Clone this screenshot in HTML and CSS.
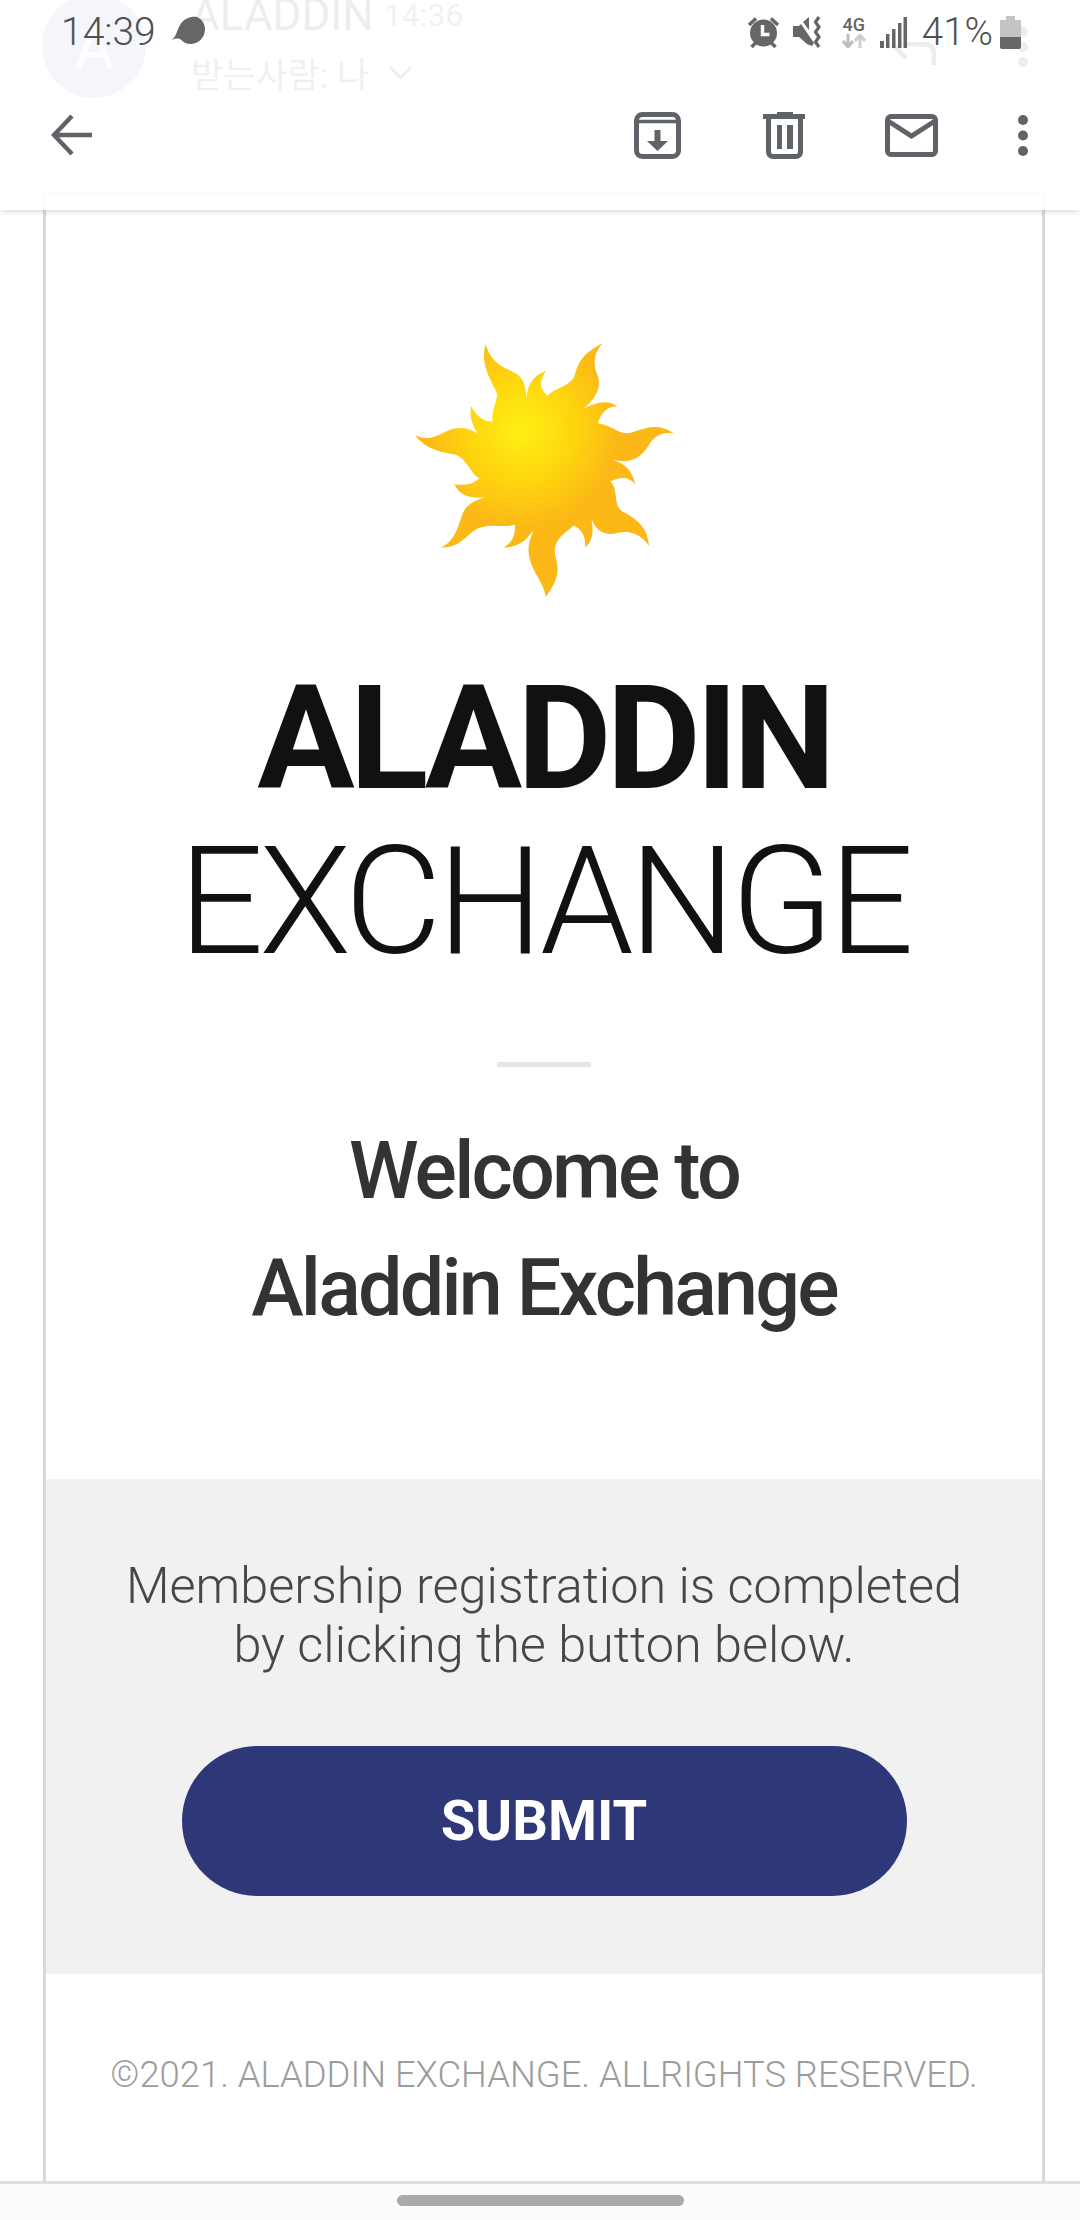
FILE: index.html
```html
<!DOCTYPE html>
<html lang="en">
<head>
<meta charset="utf-8">
<title>Aladdin Exchange</title>
<link rel="stylesheet" href="styles.css">
</head>
<body>
<div class="screen">
  <div class="ghost-row">
    <div class="avatar">A</div>
    <div class="ghost-info">
      <div class="ghost-line"><span class="ghost-name">ALADDIN</span><span class="ghost-time">14:36</span></div>
      <div class="ghost-line ghost-to"><span>받는사람: 나</span>
        <svg class="ghost-chev" viewBox="0 0 24 14"><path d="M1 1l11 11L23 1" fill="none" stroke="#333" stroke-width="3"/></svg>
      </div>
    </div>
    <div class="ghost-actions">
      <svg class="ghost-reply" viewBox="0 0 45 23"><path d="M1 2l14 14M14 2h19q10 0 10 10v11" fill="none" stroke="#222" stroke-width="5"/></svg>
      <svg class="ghost-more" viewBox="0 0 10 40"><circle cx="5" cy="5" r="5" fill="#222"/><circle cx="5" cy="20" r="5" fill="#222"/><circle cx="5" cy="35" r="5" fill="#222"/></svg>
    </div>
  </div>
  <main class="card">
    <section class="hero">
      <svg class="sun" viewBox="72 72 778 760" role="img" aria-label="Aladdin sun logo">
        <defs>
          <radialGradient id="sunfill" gradientUnits="userSpaceOnUse" cx="392" cy="330" r="295">
            <stop offset="0" stop-color="#fff012"/>
            <stop offset=".55" stop-color="#fed40f"/>
            <stop offset="1" stop-color="#fbb816"/>
          </radialGradient>
        </defs>
        <path fill="url(#sunfill)" d="M470 228C490 205 530 200 548 175C560 150 555 110 635 70C610 100 605 130 620 165C635 205 610 240 578 266C610 250 650 235 680 260C650 258 630 280 622 310C660 315 680 340 710 340C750 335 790 300 850 340C810 335 790 350 775 375C745 425 710 430 665 420C700 430 725 450 733 493C715 470 690 470 658 485C685 505 665 555 695 575C735 595 770 620 775 678C750 645 720 630 680 640C635 650 610 630 597 583C610 615 610 665 583 683C585 650 575 630 548 617C525 640 480 660 495 715C510 765 490 795 465 832C460 790 425 760 415 710C408 675 420 655 428 630C410 660 380 685 338 683C365 670 375 640 372 615C340 625 300 610 265 625C225 640 215 685 150 683C190 665 200 625 212 590C225 550 255 540 285 532C250 535 210 535 190 493C215 498 245 495 265 475C240 465 235 425 195 405C150 395 105 390 72 345C110 365 135 350 165 335C205 315 250 325 275 355C250 335 235 300 240 258C255 285 275 305 305 305C300 270 320 245 318 220C300 180 265 130 285 72C295 120 330 140 365 155C400 170 405 200 407 235C410 190 430 165 465 153C445 185 445 205 470 228Z"/>
      </svg>
      <h1 class="brand"><span class="brand-top">ALADDIN</span><span class="brand-bottom">EXCHANGE</span></h1>
      <div class="divider"></div>
      <h2 class="welcome">Welcome to<br>Aladdin Exchange</h2>
    </section>
    <section class="band">
      <p class="band-text">Membership registration is completed<br>by clicking the button below.</p>
      <a class="submit">SUBMIT</a>
    </section>
    <footer class="copy">©2021. ALADDIN EXCHANGE. ALLRIGHTS RESERVED.</footer>
  </main>

  <header class="topbar">
    <div class="status">
      <div class="status-left">
        <span class="clock">14:39</span>
        <svg class="ic-chat" viewBox="0 0 34 28"><path fill="#666" d="M0 24C5 22 6 14 9 9C13 2 21 0 26 1C31 3 34 8 34 13C34 22 27 28 19 28C14 28 12 25 9 23C6 22 3 23 0 24Z"/></svg>
      </div>
      <div class="status-right">
        <svg class="ic-alarm" viewBox="0 0 33 32">
          <circle cx="16.500" cy="17" r="13.500" fill="#666"/>
          <path d="M2 9l7-6.500M31 9l-7-6.500M4.500 31l4-4M28.500 31l-4-4" stroke="#666" stroke-width="3.500" fill="none"/>
          <path d="M15.500 9v9.500h7" stroke="#fff" stroke-width="3.500" fill="none"/>
        </svg>
        <svg class="ic-mute" viewBox="0 0 30 32">
          <path fill="#666" d="M0 10h6l2-2 13 19-2 3-5-2-8-7H0zM10 6l6-5v13z"/>
          <path d="M26 1l-3.500 5 3.500 5-3.500 5 3.500 5-3.500 5 3.500 5" stroke="#666" stroke-width="3.200" fill="none"/>
        </svg>
        <span class="net"><span class="net-label">4G</span>
          <svg class="ic-updown" viewBox="0 0 24 14"><path d="M6 0v12M1 7l5 6 5-6" stroke="#bdbdbd" stroke-width="3" fill="none"/><path d="M18 14V2M13 7l5-6 5 6" stroke="#cfcfcf" stroke-width="3" fill="none"/></svg>
        </span>
        <svg class="ic-signal" viewBox="0 0 27 31"><path fill="#666" d="M0 24h4v7H0zM6 17h3.500v14H6zM12 12h3.500v19H12zM18 6h3.500v25H18zM23.500 0H27v31h-3.500z"/></svg>
        <span class="pct">41%</span>
        <svg class="ic-batt" viewBox="0 0 21 33"><path fill="#c4c4c4" d="M6 0h9v4h6v18H0V4h6z"/><path fill="#666" d="M0 21h21v10a2 2 0 0 1-2 2H2a2 2 0 0 1-2-2z"/></svg>
      </div>
    </div>
    <div class="tools">
      <svg class="ic-back" viewBox="0 0 41 42"><path d="M41 21H4M21 2L3 21l18 19" fill="none" stroke="#5f6368" stroke-width="4.500"/></svg>
      <div class="tools-right">
        <svg class="ic-archive" viewBox="0 0 47 47">
          <rect x="2.500" y="2.500" width="42" height="42" rx="6" fill="none" stroke="#5f6368" stroke-width="5"/>
          <path d="M3 9.500h41" stroke="#5f6368" stroke-width="3.500"/>
          <path d="M20.500 18h6v11H34L23.500 39 13 29h7.500z" fill="#5f6368"/>
        </svg>
        <svg class="ic-trash" viewBox="0 0 42 47">
          <path d="M14 0h16v2h12v5H0V2h14z" fill="#5f6368"/>
          <path d="M5.500 6v34a4.500 4.500 0 0 0 4.500 4.500h23a4.500 4.500 0 0 0 4.500-4.500V6" fill="none" stroke="#5f6368" stroke-width="5"/>
          <path d="M14 13h5v24h-5zM24 13h6v24h-6z" fill="#5f6368"/>
        </svg>
        <svg class="ic-mail" viewBox="0 0 53 43">
          <rect x="2.500" y="2.500" width="48" height="38" rx="3.500" fill="none" stroke="#5f6368" stroke-width="5"/>
          <path d="M3 7l23.500 15L50 7" fill="none" stroke="#5f6368" stroke-width="5"/>
        </svg>
        <svg class="ic-more" viewBox="0 0 10 41"><circle cx="5" cy="5" r="5" fill="#5f6368"/><circle cx="5" cy="20.500" r="5" fill="#5f6368"/><circle cx="5" cy="36" r="5" fill="#5f6368"/></svg>
      </div>
    </div>
  </header>

  <div class="navbar"><span class="pill"></span></div>
</div>
</body>
</html>
```
FILE: styles.css
```css
* { box-sizing: border-box; }
html, body { margin: 0; padding: 0; background: #fff; }
body { font-family: Roboto, "Noto Sans CJK KR", sans-serif; }
.screen { position: relative; width: 1080px; height: 2220px; overflow: hidden; background: #fff; }

/* content beneath the translucent toolbar */
.ghost-row { height: 192px; display: flex; padding-left: 42px; gap: 45px; }
.avatar { width: 104px; height: 104px; margin-top: -6px; border-radius: 50%; background: #7e86d6; color: #fff; font-size: 60px; text-align: center; line-height: 108px; flex: none; }
.ghost-info { display: flex; flex-direction: column; color: #1c1c1c; }
.ghost-line { display: flex; align-items: center; }
.ghost-name { font-size: 44px; line-height: 48px; margin-top: -9px; }
.ghost-time { font-size: 32px; margin-left: 10px; margin-top: -9px; color: #555; }
.ghost-to { font-size: 35px; margin-top: 8px; gap: 20px; color: #444; }
.ghost-chev { width: 23px; height: 14px; }
.ghost-actions { margin-left: auto; display: flex; align-items: flex-start; gap: 82px; padding: 27px 52px 0 0; }
.ghost-reply { width: 45px; height: 23px; margin-top: 15px; }
.ghost-more { width: 10px; height: 40px; }

.card { margin: 0 35px 0 43px; border: 3px solid #d9d9d9; border-bottom: 0; background: #fff; }

.hero { display: flex; flex-direction: column; align-items: center; padding: 149px 0 132px; }
.sun { width: 259px; height: 253px; display: block; }
.brand { margin: 59px 0 0; display: flex; flex-direction: column; align-items: center; color: #111; }
.brand-top { font-size: 145px; font-weight: 700; line-height: 165px; letter-spacing: -4.900px; }
.brand-bottom { font-size: 150px; font-weight: 300; line-height: 163px; letter-spacing: -4.700px; }
.divider { width: 94px; height: 5px; margin-top: 78px; background: #e5e5e5; }
.welcome { margin: 46px 0 0; font-size: 79px; font-weight: 500; line-height: 117px; letter-spacing: -2.800px; color: #333; text-align: center; }

.band { background: #f1f1f1; height: 495px; display: flex; flex-direction: column; align-items: center; padding-top: 77px; }
.band-text { margin: 0; font-size: 50.400px; font-weight: 300; line-height: 59px; color: #474747; text-align: center; }
.submit { width: 725px; height: 150px; margin-top: 72px; border-radius: 75px; background: #2e3778; color: #fff; font-size: 56px; font-weight: 700; display: flex; align-items: center; justify-content: center; }

.copy { padding-top: 79px; height: 400px; font-size: 36.400px; font-weight: 300; color: #9c9c9c; text-align: center; white-space: nowrap; }

/* toolbar */
.topbar { position: absolute; left: 0; top: 0; width: 100%; height: 210px; background: rgba(255,255,255,.92); box-shadow: 0 2px 6px rgba(60,64,67,.18); }
.status { height: 62px; display: flex; justify-content: space-between; align-items: flex-start; padding: 14px 59px 0 61px; }
.status-left { display: flex; align-items: center; gap: 15px; }
.clock { font-size: 39px; line-height: 36px; color: #505050; font-weight: 300; }
.ic-chat { width: 34px; height: 28px; margin-top: -4px; }
.status-right { display: flex; align-items: center; color: #666; }
.ic-alarm { width: 33px; height: 32px; }
.ic-mute { width: 30px; height: 32px; margin-left: 13px; }
.net { display: flex; flex-direction: column; align-items: center; margin-left: 19px; width: 24px; }
.net-label { font-size: 18px; font-weight: 500; line-height: 18px; color: #666; }
.ic-updown { width: 24px; height: 14px; }
.ic-signal { width: 27px; height: 31px; margin-left: 14px; }
.pct { font-size: 38.500px; line-height: 36px; font-weight: 300; margin-left: 15px; color: #505050; }
.ic-batt { width: 21px; height: 33px; margin-left: 7px; }
.tools { display: flex; justify-content: space-between; align-items: center; height: 60px; margin-top: 43px; padding: 0 52px 0 51px; }
.ic-back { width: 41px; height: 42px; }
.tools-right { display: flex; align-items: center; }
.ic-archive { width: 47px; height: 47px; }
.ic-trash { width: 42px; height: 47px; margin-left: 82px; }
.ic-mail { width: 53px; height: 43px; margin-left: 80px; }
.ic-more { width: 10px; height: 41px; margin-left: 80px; }

/* gesture bar */
.navbar { position: absolute; left: 0; bottom: 0; width: 100%; height: 39px; background: rgba(252,252,252,.96); border-top: 3px solid #e0e0e0; display: flex; justify-content: center; padding-top: 11px; }
.pill { width: 287px; height: 11px; border-radius: 6px; background: #aaa; }
```
